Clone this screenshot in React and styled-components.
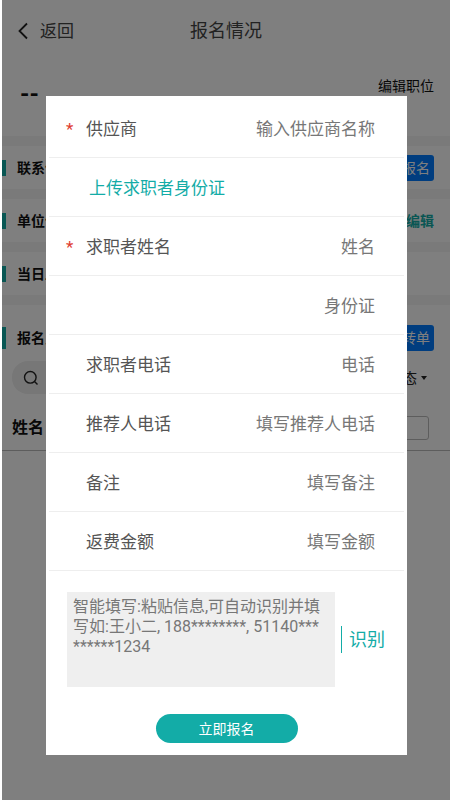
import styled, { createGlobalStyle } from "styled-components";

const GlobalStyle = createGlobalStyle`
  * {
    box-sizing: border-box;
  }
  body {
    margin: 0;
    background: #ffffff;
    font-family: Roboto, "Noto Sans CJK SC", sans-serif;
  }
  button, input, textarea {
    font-family: inherit;
  }
  h1, h2, p {
    margin: 0;
  }
`;

const Page = styled.div`
  min-height: 100vh;
  padding-left: 2px;
  color: #111111;
  overflow: hidden;
`;

const Header = styled.header`
  display: grid;
  grid-template-columns: 1fr auto 1fr;
  align-items: center;
  height: 62px;
  padding: 0 16px;
`;

const Back = styled.button`
  display: flex;
  align-items: center;
  gap: 12px;
  padding: 0;
  border: 0;
  background: none;
  color: #444444;
  font-size: 17px;
  line-height: 20px;
`;

const Title = styled.h1`
  color: #444444;
  font-size: 18px;
  font-weight: 400;
  line-height: 20px;
`;

const Job = styled.section`
  display: flex;
  justify-content: space-between;
  align-items: flex-start;
  height: 74px;
  padding: 12px 16px 0;
`;

const JobName = styled.h2`
  padding: 6px 0 0 2px;
  font-size: 24px;
  line-height: 28px;
`;

const JobEdit = styled.a`
  color: #111111;
  font-size: 14px;
  line-height: 24px;
  text-decoration: none;
`;

const Section = styled.section`
  border-top: 10px solid #f5f5f5;
`;

const Bar = styled.div`
  display: flex;
  align-items: center;
  height: ${(props) => (props.$tall ? 56 : 43)}px;
  padding: ${(props) => (props.$tall ? 10 : 0)}px 16px 0 0;
`;

const Mark = styled.span`
  width: 4px;
  height: ${(props) => (props.$tall ? 22 : 16)}px;
  margin-right: 11px;
  background: #13aca7;
`;

const BarTitle = styled.h2`
  flex: 1;
  font-size: 14px;
  font-weight: 700;
  line-height: 16px;
`;

const BlueButton = styled.button`
  height: 26px;
  padding: 0 4px;
  border: 0;
  border-radius: 3px;
  background: #007aff;
  color: #ffffff;
  font-size: 14px;
  line-height: 16px;
`;

const EditLink = styled.a`
  color: #13aca7;
  font-size: 14px;
  font-weight: 700;
  line-height: 16px;
  text-decoration: none;
`;

const Filter = styled.div`
  display: flex;
  justify-content: space-between;
  align-items: center;
  padding: 0 23px 0 10px;
`;

const Search = styled.label`
  display: flex;
  align-items: center;
  width: 240px;
  height: 33px;
  padding-left: 11px;
  border-radius: 16px;
  background: #eeeeee;

  input {
    width: 160px;
    border: 0;
    background: none;
  }
`;

const Status = styled.button`
  display: flex;
  align-items: center;
  gap: 4px;
  padding: 0;
  border: 0;
  background: none;
  color: #222222;
  font-size: 14px;
  line-height: 16px;
`;

const Table = styled.table`
  width: 100%;
  margin-top: 12px;
  border-collapse: collapse;

  th {
    height: 44px;
    padding: 0 21px 0 10px;
    border-bottom: 1px solid #bbbbbb;
    font-size: 16px;
    line-height: 20px;
    text-align: left;
  }
  th:last-child {
    text-align: right;
  }
  input {
    width: 60px;
    height: 24px;
    border: 1px solid #bbbbbb;
    border-radius: 3px;
    background: none;
    vertical-align: middle;
  }
`;

const Overlay = styled.div`
  position: fixed;
  inset: 0 0 0 2px;
  display: flex;
  justify-content: center;
  align-items: flex-start;
  padding: 96px 43px 0 44px;
  background: rgba(0, 0, 0, 0.5);
`;

const Dialog = styled.form`
  width: 100%;
  padding: 3px 3px 12px;
  background: #ffffff;
`;

const Row = styled.div`
  display: flex;
  align-items: center;
  height: 59px;
  padding: 2px 29px 0 17px;
  border-bottom: 1px solid #eeeeee;
`;

const Star = styled.span`
  width: 20px;
  color: #e03c31;
  font-size: 17px;
  line-height: 20px;
`;

const Label = styled.label`
  color: #555555;
  font-size: 17px;
  line-height: 20px;
  white-space: nowrap;
`;

const Field = styled.input`
  flex: 1;
  min-width: 0;
  height: 24px;
  padding: 0;
  border: 0;
  outline: 0;
  background: none;
  font-size: 17px;
  text-align: right;

  &::placeholder {
    color: #777777;
  }
`;

const Upload = styled.button`
  padding: 0;
  margin-left: 23px;
  border: 0;
  background: none;
  color: #13aca7;
  font-size: 17px;
  line-height: 20px;
`;

const Smart = styled.div`
  display: flex;
  align-items: center;
  gap: 6px;
  padding: 21px 19px 0 18px;
`;

const Paste = styled.textarea`
  flex: 1;
  min-width: 0;
  height: 95px;
  padding: 5px 12px 5px 6px;
  border: 0;
  outline: 0;
  resize: none;
  background: #efefef;
  font-size: 16px;
  line-height: 20px;
  word-break: break-all;

  &::placeholder {
    color: #777777;
  }
`;

const Recognize = styled.button`
  height: 27px;
  padding: 0 0 0 7px;
  border: 0;
  border-left: 1px solid #13aca7;
  background: none;
  color: #13aca7;
  font-size: 18px;
  line-height: 20px;
`;

const Submit = styled.button`
  display: block;
  width: 142px;
  height: 29px;
  margin: 27px auto 0;
  padding: 0;
  border: 0;
  border-radius: 15px;
  background: #13aca7;
  color: #ffffff;
  font-size: 14px;
  line-height: 16px;
`;

const fields = [
  { id: "name", label: "求职者姓名", hint: "姓名", required: true },
  { id: "idcard", label: "", hint: "身份证" },
  { id: "phone", label: "求职者电话", hint: "电话" },
  { id: "referrer", label: "推荐人电话", hint: "填写推荐人电话" },
  { id: "remark", label: "备注", hint: "填写备注" },
  { id: "amount", label: "返费金额", hint: "填写金额" },
];

const FormRow = ({ id, label, hint, required }) => (
  <Row>
    <Star>{required ? "*" : ""}</Star>
    <Label htmlFor={id}>{label}</Label>
    <Field id={id} placeholder={hint} aria-label={label || hint} />
  </Row>
);

const App = () => {
  return (
    <>
      <GlobalStyle />
      <Page>
        <Header>
          <Back type="button">
            <svg width="10" height="18" viewBox="0 0 10 18" fill="none">
              <path d="M9 1.5L1.5 9L9 16.5" stroke="#222222" strokeWidth="1.8" />
            </svg>
            返回
          </Back>
          <Title>报名情况</Title>
        </Header>
        <Job>
          <JobName>--</JobName>
          <JobEdit href="#edit">编辑职位</JobEdit>
        </Job>
        <Section>
          <Bar>
            <Mark />
            <BarTitle>联系信息</BarTitle>
            <BlueButton type="button">我要报名</BlueButton>
          </Bar>
        </Section>
        <Section>
          <Bar>
            <Mark />
            <BarTitle>单位信息</BarTitle>
            <EditLink href="#unit">编辑</EditLink>
          </Bar>
        </Section>
        <Section>
          <Bar>
            <Mark />
            <BarTitle>当日工价</BarTitle>
          </Bar>
        </Section>
        <Section>
          <Bar $tall>
            <Mark $tall />
            <BarTitle>报名人员</BarTitle>
            <BlueButton type="button">转单</BlueButton>
          </Bar>
          <Filter>
            <Search>
              <svg width="16" height="16" viewBox="0 0 16 16" fill="none" stroke="#222222" strokeWidth="1.4">
                <circle cx="7.3" cy="7.3" r="5.8" />
                <path d="M11.5 11.5L14.5 14.5" />
              </svg>
              <input aria-label="搜索" />
            </Search>
            <Status type="button">
              状态
              <svg width="6" height="4" viewBox="0 0 6 4">
                <path d="M0 0H6L3 4Z" fill="#222222" />
              </svg>
            </Status>
          </Filter>
          <Table>
            <thead>
              <tr>
                <th>姓名</th>
                <th>
                  <input aria-label="筛选" />
                </th>
              </tr>
            </thead>
          </Table>
        </Section>
      </Page>
      <Overlay>
        <Dialog>
          <FormRow id="supplier" label="供应商" hint="输入供应商名称" required />
          <Row>
            <Upload type="button">上传求职者身份证</Upload>
          </Row>
          {fields.map((field) => (
            <FormRow key={field.id} {...field} />
          ))}
          <Smart>
            <Paste
              aria-label="智能填写"
              placeholder="智能填写:粘贴信息,可自动识别并填写如:王小二, 188********, 51140*********1234"
            />
            <Recognize type="button">识别</Recognize>
          </Smart>
          <Submit type="submit">立即报名</Submit>
        </Dialog>
      </Overlay>
    </>
  );
};

export default App;
